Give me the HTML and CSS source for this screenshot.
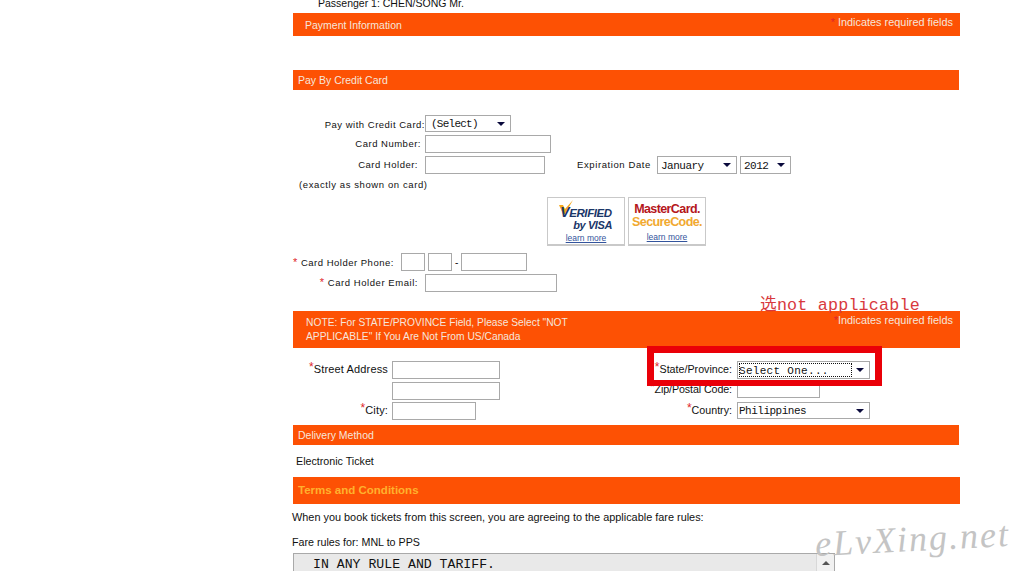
FILE: index.html
```html
<!DOCTYPE html>
<html lang="en">
<head>
  <meta charset="UTF-8">
  <title>Payment Information</title>
  <link rel="stylesheet" href="styles.css">
</head>
<body>

  <div class="page">
    <div class="passenger">Passenger 1: CHEN/SONG Mr.</div>

    <div class="bar bar-wide bar-payment">
      <span class="bar-title">Payment Information</span>
      <span class="required"><span class="star">*</span> Indicates required fields</span>
    </div>

    <div class="bar bar-card">Pay By Credit Card</div>

    <div class="card-form">
      <div class="row row-first">
        <label class="lbl lbl-pay">Pay with Credit Card:</label>
        <div class="sel sel-card"><select><option>(Select)</option></select></div>
      </div>
      <div class="row">
        <label class="lbl lbl-number">Card Number:</label>
        <input type="text" class="inp inp-number">
      </div>
      <div class="row">
        <label class="lbl lbl-holder">Card Holder:</label>
        <input type="text" class="inp inp-holder">
        <label class="lbl-expiry">Expiration Date</label>
        <div class="sel sel-month"><select><option>January</option></select></div>
        <div class="sel sel-year"><select><option>2012</option></select></div>
      </div>
      <div class="hint">(exactly as shown on card)</div>

      <div class="logos">
        <a class="logo logo-visa">
          <svg class="visa-check" width="16" height="14" viewBox="0 0 16 14"><path d="M1 5 L5 5 L7 9 L15 0 L7 14 L5 14 Z" fill="#f5a81c"/></svg>
          <span class="visa-top"><span class="visa-v">V</span>ERIFIED</span>
          <span class="visa-by">by VISA</span>
          <span class="learn">learn more</span>
        </a>
        <a class="logo logo-mc">
          <span class="mc-top">MasterCard.</span>
          <span class="mc-code">SecureCode.</span>
          <span class="learn">learn more</span>
        </a>
      </div>

      <div class="row">
        <label class="lbl lbl-phone"><span class="star">*</span> Card Holder Phone:</label>
        <input type="text" class="inp inp-short">
        <input type="text" class="inp inp-short">
        <span class="dash">-</span>
        <input type="text" class="inp inp-phone">
      </div>
      <div class="row">
        <label class="lbl lbl-holder lbl-email"><span class="star">*</span> Card Holder Email:</label>
        <input type="text" class="inp inp-email">
      </div>
    </div>

    <div class="bar bar-wide bar-note">
      <span class="note-text">NOTE: For STATE/PROVINCE Field, Please Select "NOT APPLICABLE" If You Are Not From US/Canada</span>
      <span class="required"><span class="star">*</span>Indicates required fields</span>
    </div>

    <div class="address">
      <div class="addr-left">
        <div class="addr-row">
          <label class="addr-lbl"><span class="star">*</span>Street Address</label>
          <input type="text" class="inp inp-street">
        </div>
        <div class="addr-row">
          <span class="addr-lbl"></span>
          <input type="text" class="inp inp-street">
        </div>
        <div class="addr-row addr-city">
          <label class="addr-lbl"><span class="star">*</span>City:</label>
          <input type="text" class="inp inp-city">
        </div>
      </div>
      <div class="addr-right">
        <div class="addr-row">
          <label class="addr-lbl"><span class="star">*</span>State/Province:</label>
          <div class="sel sel-state sel-focus"><select><option>Select One...</option></select></div>
        </div>
        <div class="addr-row addr-zip">
          <label class="addr-lbl"><span class="star">*</span>Zip/Postal Code:</label>
          <input type="text" class="inp inp-zip">
        </div>
        <div class="addr-row addr-country">
          <label class="addr-lbl"><span class="star">*</span>Country:</label>
          <div class="sel sel-state"><select><option>Philippines</option></select></div>
        </div>
      </div>
    </div>

    <div class="bar bar-delivery">Delivery Method</div>
    <div class="ticket">Electronic Ticket</div>

    <div class="bar bar-wide bar-terms">Terms and Conditions</div>
    <p class="terms-text">When you book tickets from this screen, you are agreeing to the applicable fare rules:</p>
    <p class="fare-for">Fare rules for: MNL to PPS</p>

    <div class="rules">
      <pre class="rules-text">IN ANY RULE AND TARIFF.</pre>
      <div class="scroll"><span class="scroll-up"></span></div>
    </div>

    <!-- marks added on top of the screenshot -->
    <div class="note-mark">选not applicable</div>
    <div class="red-box"></div>
    <div class="watermark">eLvXing.net</div>
  </div>

</body>
</html>
```

FILE: styles.css
```css
* {
  margin: 0;
  padding: 0;
  box-sizing: border-box;
}
html, body {
  height: 100%;
  overflow: hidden;
  background: #fff;
}
body {
  font-family: 'Liberation Sans', Arial, sans-serif;
  font-size: 11px;
  color: #111;
}
.page {
  position: relative;
  display: flow-root;
  height: 571px;
  padding-left: 293px;
}
.star {
  color: #e0262a;
}

/* orange bars */
.bar {
  width: 666px;
  background: #fd5104;
  color: #f6e6dc;
  font-size: 10.5px;
  padding-left: 5px;
}
.bar-wide {
  width: 667px;
}
.bar-payment {
  height: 23px;
  display: flex;
  justify-content: space-between;
  padding: 0 7px 0 12px;
}
.bar-title {
  line-height: 24px;
}
.required {
  line-height: 19px;
  font-size: 10.9px;
}
.bar-card {
  height: 20px;
  line-height: 20px;
  margin-top: 34px;
}
.bar-note {
  height: 37px;
  margin-top: 19px;
  display: flex;
  justify-content: space-between;
  padding: 0 7px 0 13px;
}
.note-text {
  width: 280px;
  font-size: 10.25px;
  line-height: 14px;
  padding-top: 5px;
}
.bar-delivery {
  height: 20px;
  line-height: 20px;
  margin-top: 5px;
}
.bar-terms {
  height: 27px;
  line-height: 27px;
  margin-top: 10px;
  font-size: 11.5px;
  font-weight: bold;
  color: #ffb12e;
}

.passenger {
  margin-top: -5px;
  height: 18px;
  line-height: 17px;
  padding-left: 25px;
  font-size: 10.5px;
}

/* credit card form */
.card-form {
  padding-top: 25px;
}
.row {
  display: flex;
  align-items: center;
  height: 18px;
  margin-bottom: 3px;
}
.row-first {
  height: 17px;
}
.lbl {
  width: 132px;
  padding-bottom: 2px;
  text-align: right;
  font-size: 9.5px;
  letter-spacing: 0.5px;
  white-space: nowrap;
}
.lbl-pay {
  padding-top: 2px;
  padding-bottom: 0;
}
.lbl-number {
  padding-right: 4px;
}
.lbl-holder {
  padding-right: 7px;
}
.lbl-phone {
  width: 108px;
  padding-bottom: 0;
  text-align: left;
}
.lbl-email {
  letter-spacing: 0.55px;
}
.lbl-expiry {
  margin-left: 32px;
  width: 80px;
  padding-bottom: 2px;
  font-size: 9.5px;
  letter-spacing: 0.6px;
  white-space: nowrap;
}
.hint {
  height: 16px;
  line-height: 16px;
  margin-top: 2px;
  padding-left: 6px;
  font-size: 9.5px;
  letter-spacing: 0.6px;
}
.inp {
  display: block;
  height: 18px;
  border: 1px solid #a9a9a9;
  background: #fff;
}
.inp-number { width: 126px; }
.inp-holder { width: 120px; }
.inp-email { width: 132px; }
.inp-short { width: 24px; margin-right: 3px; }
.inp-phone { width: 66px; }
.inp-street { width: 108px; }
.inp-city { width: 84px; }
.inp-zip { width: 83px; }
.dash {
  width: 6px;
  font-size: 10px;
}

/* selects with the old windows arrow */
.sel {
  position: relative;
  height: 18px;
}
.sel select {
  display: block;
  width: 100%;
  height: 100%;
  appearance: none;
  border: 1px solid #a9a9a9;
  border-radius: 0;
  background: #fff;
  color: #111;
  padding: 1px 0 0 3px;
  font-family: 'Liberation Mono', 'DejaVu Sans Mono', monospace;
  font-size: 11px;
  letter-spacing: -0.5px;
}
.sel::after {
  content: "";
  position: absolute;
  right: 6px;
  top: 7px;
  border-left: 4px solid transparent;
  border-right: 4px solid transparent;
  border-top: 4px solid #0a0a3c;
}
.sel-card { width: 86px; height: 17px; }
.sel-card select { padding: 0 0 0 5px; letter-spacing: -0.75px; }
.sel-month { width: 80px; margin-right: 3px; }
.sel-year { width: 51px; }
.sel-state { width: 133px; }
.sel-state select { padding-left: 1px; }
.sel-focus select { letter-spacing: 0.3px; }
.sel-focus::before {
  content: "";
  position: absolute;
  left: 2px;
  top: 2px;
  right: 18px;
  bottom: 2px;
  border: 1px dotted #111;
  pointer-events: none;
}

/* card logos */
.logos {
  display: flex;
  gap: 3px;
  margin-top: 4px;
  margin-bottom: 7px;
  padding-left: 254px;
}
.logo {
  position: relative;
  display: flex;
  flex-direction: column;
  align-items: center;
  width: 78px;
  height: 49px;
  border: 1px solid #c9c9c9;
  border-bottom-width: 2px;
}
.logo span {
  white-space: nowrap;
}
.logo-visa {
  padding-top: 8px;
}
.logo-mc {
  padding-top: 5px;
}
.visa-check {
  position: absolute;
  left: 10px;
  top: 2px;
}
.visa-top, .visa-by {
  position: relative;
  display: block;
  font-style: italic;
  font-weight: bold;
  font-size: 11.5px;
  line-height: 12px;
  color: #1a3668;
  letter-spacing: -0.4px;
}
.visa-v {
  font-size: 14px;
}
.visa-by {
  align-self: flex-end;
  padding-right: 12px;
  font-size: 11px;
}
.mc-top, .mc-code {
  display: block;
  font-weight: bold;
  font-size: 12.5px;
  line-height: 13px;
  letter-spacing: -0.6px;
}
.mc-top { color: #b5161c; }
.mc-code { color: #f1a92f; }
.learn {
  display: block;
  margin-top: 2px;
  font-size: 8.5px;
  line-height: 10px;
  color: #33549c;
  text-decoration: underline;
}
.logo-mc .learn {
  margin-top: 3px;
}
.lbl .star {
  font-size: 11px;
}

/* address part */
.address {
  display: flex;
  height: 72px;
  padding-top: 13px;
}
.addr-left {
  width: 354px;
}
.addr-row {
  display: flex;
  height: 18px;
  align-items: center;
  margin-bottom: 3px;
}
.addr-lbl {
  display: block;
  text-align: right;
  white-space: nowrap;
  padding-bottom: 2px;
  line-height: 14px;
}
.addr-left .addr-lbl {
  width: 99px;
  padding-right: 4px;
  font-size: 11px;
  letter-spacing: 0.15px;
}
.addr-right .addr-lbl {
  width: 90px;
  padding-right: 5px;
  font-size: 10.7px;
}
.addr-city { margin-top: -1px; }
.addr-zip { margin-top: -2px; }
.addr-right .addr-zip .addr-lbl {
  padding-bottom: 0;
  letter-spacing: -0.1px;
}
.addr-country {
  height: 17px;
  margin-top: 4px;
  margin-bottom: 0;
}
.addr-country .sel { height: 17px; }
.addr-lbl .star {
  position: relative;
  top: -2px;
  font-size: 12px;
}

/* lower text */
.ticket {
  height: 22px;
  padding: 10px 0 0 3px;
  line-height: 13px;
  font-size: 10.7px;
}
.terms-text {
  margin: 7px 0 0 -1px;
  height: 13px;
  line-height: 13px;
  font-size: 10.9px;
}
.fare-for {
  margin: 12px 0 0 -1px;
  height: 13px;
  line-height: 13px;
  font-size: 10.7px;
}
.rules {
  display: flex;
  width: 542px;
  height: 18px;
  margin-top: 4px;
  border: 1px solid #a9a9a9;
  border-bottom: none;
  background: #e9e9e9;
}
.rules-text {
  flex: 1;
  padding: 5px 0 0 19px;
  font-family: 'Liberation Mono', monospace;
  font-size: 13.2px;
  line-height: 12px;
}
.scroll {
  width: 18px;
  background: #f1f1f1;
  border-left: 1px solid #d8d8d8;
}
.scroll-up {
  display: block;
  width: 0;
  margin: 7px auto 0;
  border-left: 4px solid transparent;
  border-right: 4px solid transparent;
  border-bottom: 4px solid #555;
}

/* overlays */
.note-mark {
  position: absolute;
  left: 760px;
  top: 295px;
  font-family: 'Liberation Mono', 'Noto Sans CJK SC', monospace;
  font-size: 16.7px;
  letter-spacing: 0.2px;
  line-height: 22px;
  color: #d8393d;
  white-space: nowrap;
}
.red-box {
  position: absolute;
  left: 647px;
  top: 346px;
  width: 235px;
  height: 40px;
  border: 7px solid #ea0008;
  border-bottom-width: 6px;
}
.watermark {
  position: absolute;
  left: 815px;
  top: 517px;
  font-family: 'Liberation Serif', serif;
  font-style: italic;
  font-size: 36px;
  letter-spacing: 2px;
  line-height: 44px;
  color: #c4c4c4;
  white-space: nowrap;
  transform: rotate(-3deg);
}
```
